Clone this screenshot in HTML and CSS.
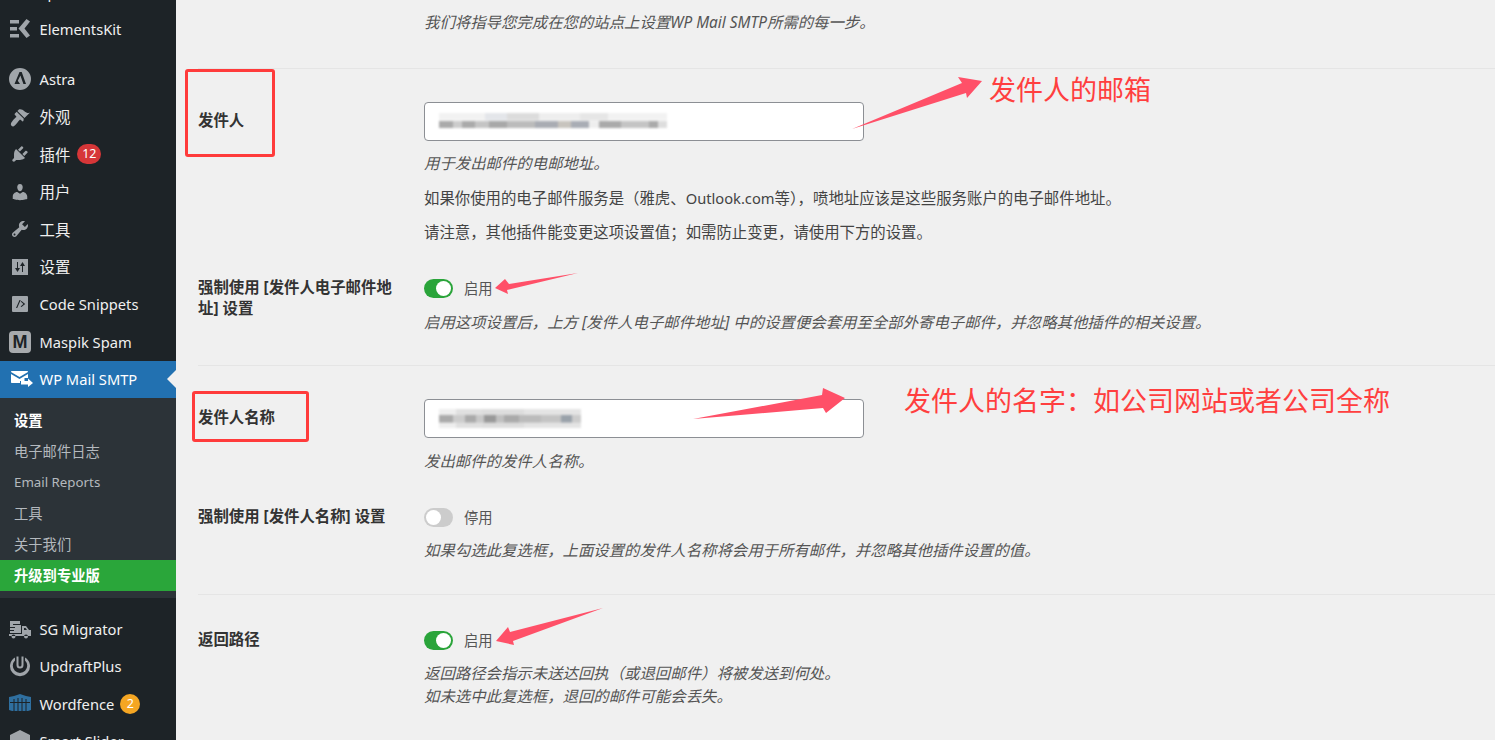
FILE: index.html
```html
<!DOCTYPE html>
<html lang="zh-CN">
<head>
    <meta charset="UTF-8">
    <meta name="viewport" content="width=device-width, initial-scale=1.0">
    <title>WP Mail SMTP 设置</title>
    <link rel="stylesheet" href="styles.css">
</head>
<body>
    <div class="layout">
        <nav class="sidebar">
            <div class="menu-item">
                <svg class="menu-icon" viewBox="0 0 20 20"><path d="M3 3l14 0-3 5 3 9H3l3-7z"/></svg>
                <span class="latin">Spectra</span>
            </div>
            <div class="menu-item">
                <svg class="menu-icon" viewBox="0 0 20 20"><path d="M0 1h9v3.500H0zM0 8h7v3.500H0zM0 15h9v3.500H0zM16.500 0l3.500 2.500-5.500 7 5.500 7-3.500 2.500-8-9.500z"/></svg>
                <span class="latin">ElementsKit</span>
            </div>
            <div class="menu-sep"></div>
            <div class="menu-item">
                <svg class="menu-icon icon-big" viewBox="0 0 22 22"><path fill-rule="evenodd" d="M11 0a11 11 0 1 0 0 22 11 11 0 0 0 0-22zM10.500 4h2.200l4.300 12h-2.600l-3-8.500-2.600 5.300 2.200 3.200H5.500z"/></svg>
                <span class="latin">Astra</span>
            </div>
            <div class="menu-item">
                <svg class="menu-icon" viewBox="0 0 20 20"><path d="M14.480 11.060L7.410 3.990l1.500-1.500c.5-.56 2.300-.47 3.510.32 1.210.8 1.430 1.280 2.910 2.100 1.180.64 2.450 1.260 4.450.85zm-.71.71L6.700 4.700 4.930 6.470c-.39.39-.39 1.020 0 1.410l1.060 1.060c.39.39.39 1.030 0 1.420-.6.6-6 5.400-5 7.700.5 1.200 1.600 1.700 2.700 1.200 2-1 5.200-5.600 5.800-6.200.39-.39 1.030-.39 1.420 0l1.060 1.060c.39.39 1.020.39 1.410 0z"/></svg>
                <span>外观</span>
            </div>
            <div class="menu-item">
                <svg class="menu-icon" viewBox="0 0 20 20"><path d="M13.110 4.360L9.870 7.600 8 5.730l3.240-3.240c.35-.34 1.050-.2 1.560.32.52.51.66 1.210.31 1.550zm-8 1.770l.91-1.120 9.010 9.010-1.190.84c-.71.71-2.630 1.160-3.820 1.160H6.140L4.900 17.260c-.59.59-1.540.59-2.120 0-.59-.58-.59-1.530 0-2.120l1.240-1.240v-3.880c0-1.130.4-3.190 1.090-3.890zm7.260 3.970l3.240-3.240c.34-.35 1.040-.21 1.550.31.52.51.66 1.210.31 1.550l-3.240 3.250z"/></svg>
                <span>插件</span>
                <span class="count count-red">12</span>
            </div>
            <div class="menu-item">
                <svg class="menu-icon" viewBox="0 0 20 20"><path d="M10 9.250c-2.270 0-2.730-3.440-2.730-3.440C7 4.020 7.820 2 9.970 2c2.160 0 2.980 2.020 2.710 3.810 0 0-.41 3.440-2.680 3.440zm0 2.570L12.720 10c2.390 0 4.520 2.330 4.520 4.530v2.490s-3.650 1.130-7.240 1.130c-3.650 0-7.240-1.130-7.240-1.130v-2.490c0-2.250 1.940-4.480 4.470-4.480z"/></svg>
                <span>用户</span>
            </div>
            <div class="menu-item">
                <svg class="menu-icon" viewBox="0 0 20 20"><path d="M16.680 9.770c-1.340 1.340-3.300 1.670-4.950.99l-5.410 6.520c-.99.99-2.590.99-3.580 0s-.99-2.590 0-3.570l6.520-5.420c-.68-1.650-.35-3.610.99-4.950 1.280-1.280 3.120-1.620 4.720-1.060l-2.890 2.890 2.820 2.820 2.860-2.870c.53 1.580.18 3.390-1.080 4.650zM3.810 16.210c.4.39 1.040.39 1.430 0 .4-.4.4-1.040 0-1.430-.39-.4-1.030-.4-1.430 0-.39.39-.39 1.030 0 1.430z"/></svg>
                <span>工具</span>
            </div>
            <div class="menu-item">
                <svg class="menu-icon" viewBox="0 0 20 20"><path fill-rule="evenodd" d="M2 2h16v16H2zM7 5v6H5l2.500 4L10 11H8V5zM12.500 5L10 9h2v6h1V9h2z"/></svg>
                <span>设置</span>
            </div>
            <div class="menu-item">
                <svg class="menu-icon" viewBox="0 0 20 20"><path fill-rule="evenodd" d="M3 2h14a1 1 0 0 1 1 1v14a1 1 0 0 1-1 1H3a1 1 0 0 1-1-1V3a1 1 0 0 1 1-1zM9.500 6L6 14h1.200l3.500-8zM11.500 7l-.9.600L13.400 10l-2.800 2.400.9.600 3.700-3z"/></svg>
                <span class="latin">Code Snippets</span>
            </div>
            <div class="menu-item">
                <span class="maspik-logo">M</span>
                <span class="latin">Maspik Spam</span>
            </div>
            <div class="menu-item menu-active">
                <svg class="menu-icon icon-mail" viewBox="0 0 22 16"><path d="M1 0h15c.6 0 1 .4 1 1L8.500 6 0 1c0-.6.4-1 1-1zM0 3l8.500 5L17 3v4h-3.500v3H9v2H1c-.6 0-1-.4-1-1zM10 10h7V7.500L22 12l-5 4v-2.500h-7z"/></svg>
                <span class="latin">WP Mail SMTP</span>
            </div>
            <ul class="submenu">
                <li class="sub-current">设置</li>
                <li>电子邮件日志</li>
                <li class="latin-sub">Email Reports</li>
                <li>工具</li>
                <li>关于我们</li>
                <li class="sub-upgrade">升级到专业版</li>
            </ul>
            <div class="menu-sep"></div>
            <div class="menu-item">
                <svg class="menu-icon icon-big" viewBox="0 0 22 20"><path fill-rule="evenodd" d="M1 2h10v3H4v1h8v8H1v-2h4v-1H1V9h5V8H1zM13 7h4l3 4h2v6H0v-2h13zM15 9v2h3l-1.500-2zM4.500 15.500a2 2 0 1 0 0 4 2 2 0 0 0 0-4zM17 15.500a2 2 0 1 0 0 4 2 2 0 0 0 0-4z"/></svg>
                <span class="latin">SG Migrator</span>
            </div>
            <div class="menu-item">
                <svg class="menu-icon icon-big" viewBox="0 0 22 22"><path fill-rule="evenodd" d="M6 2.500a10 10 0 1 0 10 0v3a7.200 7.200 0 1 1-10 0z"/><path d="M7.500 1.500h2V10a1.500 1.500 0 0 0 3 0V1.500h2V10a3.500 3.500 0 0 1-7 0z"/></svg>
                <span class="latin">UpdraftPlus</span>
            </div>
            <div class="menu-item">
                <svg class="menu-icon icon-big icon-blue" viewBox="0 0 22 20"><path d="M0 3l5-1 6-2 6 2 5 1v13l-3 1H3l-3-1z"/><path class="shield-lines" d="M5 5v12M9 4v13M13 4v13M17 5v12M1 8.500h20"/></svg>
                <span class="latin">Wordfence</span>
                <span class="count count-orange">2</span>
            </div>
            <div class="menu-item">
                <svg class="menu-icon icon-big" viewBox="0 0 22 22"><path d="M11 0l10 5v12l-10 5-10-5V5z"/></svg>
                <span class="latin">Smart Slider</span>
            </div>
        </nav>

        <main class="content">
            <section class="settings-row row-intro">
                <p class="help">我们将指导您完成在您的站点上设置WP Mail SMTP所需的每一步。</p>
            </section>

            <section class="settings-row row-sender">
                <div class="field">
                    <label class="field-label label-main">发件人</label>
                    <div class="field-body">
                        <div class="text-box">
                            <span class="mosaic mosaic-email"></span>
                            <span class="box-patch"></span>
                        </div>
                        <p class="help help-first">用于发出邮件的电邮地址。</p>
                        <p class="help help-plain">如果你使用的电子邮件服务是（雅虎、<span class="latin">Outlook.com</span>等），喷地址应该是这些服务账户的电子邮件地址。</p>
                        <p class="help help-plain">请注意，其他插件能变更这项设置值；如需防止变更，请使用下方的设置。</p>
                    </div>
                </div>
                <div class="field field-force">
                    <label class="field-label label-toggle">强制使用 [发件人电子邮件地址] 设置</label>
                    <div class="field-body">
                        <div class="toggle-line">
                            <span class="toggle toggle-on"></span>
                            <span class="toggle-text">启用</span>
                        </div>
                        <p class="help help-toggle">启用这项设置后，上方 [发件人电子邮件地址] 中的设置便会套用至全部外寄电子邮件，并忽略其他插件的相关设置。</p>
                    </div>
                </div>
            </section>

            <section class="settings-row row-name">
                <div class="field">
                    <label class="field-label label-main">发件人名称</label>
                    <div class="field-body">
                        <div class="text-box">
                            <span class="mosaic mosaic-name"></span>
                        </div>
                        <p class="help help-first">发出邮件的发件人名称。</p>
                    </div>
                </div>
                <div class="field field-force">
                    <label class="field-label label-toggle">强制使用 [发件人名称] 设置</label>
                    <div class="field-body">
                        <div class="toggle-line">
                            <span class="toggle"></span>
                            <span class="toggle-text">停用</span>
                        </div>
                        <p class="help help-toggle">如果勾选此复选框，上面设置的发件人名称将会用于所有邮件，并忽略其他插件设置的值。</p>
                    </div>
                </div>
            </section>

            <section class="settings-row row-return">
                <div class="field">
                    <label class="field-label label-toggle">返回路径</label>
                    <div class="field-body">
                        <div class="toggle-line">
                            <span class="toggle toggle-on"></span>
                            <span class="toggle-text">启用</span>
                        </div>
                        <p class="help help-toggle">返回路径会指示未送达回执（或退回邮件）将被发送到何处。<br>如未选中此复选框，退回的邮件可能会丢失。</p>
                    </div>
                </div>
            </section>
        </main>
    </div>

    <!-- annotations drawn on top of the screenshot -->
    <div class="mark mark-sender"></div>
    <div class="mark mark-name"></div>
    <svg class="arrows" viewBox="0 0 1495 740">
        <polygon points="852,129 962,83 958,77 982,81 967,98 966,93"/>
        <polygon points="693,419 822,395 823,388 845,398 826,413 823,408"/>
        <polygon points="578,273 509,284 505,279 495,288 508,294 507,290"/>
        <polygon points="603,608 510,632 508,627 496,641 514,645 513,641"/>
    </svg>
    <div class="note note-sender">发件人的邮箱</div>
    <div class="note note-name">发件人的名字：如公司网站或者公司全称</div>
</body>
</html>
```

FILE: styles.css
```css
html, body {
    margin: 0;
    height: 740px;
    overflow: hidden;
}
body {
    position: relative;
    font-family: "Noto Sans", "Noto Sans CJK SC", sans-serif;
    background-color: #f0f0f0;
}
.layout {
    display: flex;
    height: 740px;
}

/* admin menu */
.sidebar {
    width: 176px;
    flex-shrink: 0;
    background: #1d2327;
    color: #f0f0f0;
    font-size: 15.400px;
    overflow: hidden;
    margin-top: -27px;
    height: 780px;
}
.latin {
    font-size: 14.700px;
}
.menu-item {
    display: flex;
    align-items: center;
    height: 37.500px;
    padding-left: 10px;
    position: relative;
}
.menu-icon {
    width: 20px;
    height: 20px;
    margin-right: 9.500px;
    fill: #a0a5aa;
    flex-shrink: 0;
}
.icon-big {
    width: 22px;
    height: 22px;
    margin-left: -1px;
    margin-right: 8.500px;
}
.icon-mail {
    width: 22px;
    height: 16px;
    margin-left: 1px;
    margin-right: 6.500px;
}
.icon-blue {
    fill: #2f6f9f;
}
.shield-lines {
    stroke: #1d2327;
    stroke-width: 1;
    fill: none;
}
.maspik-logo {
    width: 22px;
    height: 22px;
    margin-left: -1px;
    margin-right: 8.500px;
    border-radius: 4px;
    background: #a7aaad;
    color: #1d2327;
    font: bold 18px/22px "Liberation Sans", sans-serif;
    text-align: center;
}
.menu-sep {
    height: 12.500px;
}
.menu-active {
    background: #2271b1;
    color: #fff;
}
.menu-active .menu-icon {
    fill: #fff;
}
.menu-active::after {
    content: "";
    position: absolute;
    right: 0;
    top: 50%;
    margin-top: -9px;
    border: 9px solid transparent;
    border-right-color: #f0f0f0;
    border-left-width: 0;
}
.count {
    margin-left: 7px;
    height: 20px;
    min-width: 20px;
    border-radius: 10px;
    padding: 0 2px;
    box-sizing: border-box;
    color: #fff;
    font-size: 12.500px;
    line-height: 20px;
    text-align: center;
}
.count-red {
    background: #d63638;
    min-width: 24px;
}
.count-orange {
    background: #f5a623;
    margin-left: 6px;
}
.submenu {
    list-style: none;
    margin: 0;
    padding: 6.500px 0 7px;
    background: #2c3338;
    color: #b4b9be;
    font-size: 14.300px;
}
.submenu li {
    height: 31px;
    line-height: 31px;
    padding-left: 14px;
}
.submenu .latin-sub {
    font-size: 13.300px;
}
.sub-current {
    color: #fff;
    font-weight: 700;
}
.submenu .sub-upgrade {
    background: #2aa63a;
    color: #fff;
    font-weight: 700;
}

/* settings form */
.content {
    flex: 1;
    min-width: 0;
    padding-left: 22px;
    color: #444;
}
.settings-row {
    border-bottom: 1px solid #e5e5e5;
}
.row-intro {
    height: 69px;
    padding-left: 226px;
    box-sizing: border-box;
}
.row-intro .help {
    margin: 0;
    padding-top: 11px;
    line-height: 24px;
}
.row-sender {
    height: 297px;
    box-sizing: border-box;
    padding-top: 33px;
}
.row-sender .help-toggle {
    margin-top: 13px;
}
.row-name {
    height: 229px;
    box-sizing: border-box;
    padding-top: 33px;
}
.row-name .help-first {
    margin-top: 7px;
}
.row-return {
    border-bottom: 0;
    padding-top: 35px;
}
.field {
    display: grid;
    grid-template-columns: 226px 440px;
    width: max-content;
}
.field-force {
    margin-top: 28px;
}
.field-label {
    font-size: 15.400px;
    font-weight: 700;
    line-height: 21px;
    color: #333;
}
.label-main {
    padding-top: 8px;
}
.label-toggle {
    width: 200px;
    margin-top: -1px;
}
.field-body {
    width: 1040px;
}
.text-box {
    position: relative;
    width: 440px;
    height: 39px;
    box-sizing: border-box;
    background: #fff;
    border: 1px solid #8c8f94;
    border-radius: 4px;
    overflow: hidden;
}
.box-patch {
    position: absolute;
    left: 4px;
    bottom: -1px;
    width: 239px;
    height: 3px;
    background: #fff;
}
.mosaic {
    position: absolute;
    left: 14px;
    top: 10px;
    filter: blur(1px);
    background-repeat: no-repeat;
}
.mosaic-email {
    width: 228px;
    height: 15px;
    background-position: 0 0, 0 100%;
    background-size: 100% 50%;
    background-image:
        linear-gradient(90deg, #f2f2f2 0 20%, #e4e6ea 20% 30%, #dcdcdc 30% 44%, #eee 44% 62%, #e6e6e6 62% 74%, #f2f2f2 74% 100%),
        linear-gradient(90deg, #aaa 0 6%, #ccc 6% 10%, #aaa 10% 16%, #c4c4c4 16% 22%, #a8a8a8 22% 30%, #bbb 30% 42%, #a9acb3 42% 52%, #c8c4be 52% 58%, #a9adb5 58% 66%, #eee 66% 70%, #aaa 70% 80%, #c4c4c4 80% 92%, #aaa 92% 96%, #ddd 96% 100%);
}
.mosaic-name {
    width: 142px;
    height: 19px;
    top: 9px;
    background-position: 0 55%, 0 0;
    background-size: 100% 40%, 100% 100%;
    background-image:
        linear-gradient(90deg, #aaa 0 10%, #ccc 10% 18%, #aaa 18% 26%, #c8c8c8 26% 32%, #999 32% 40%, #c0c0c0 40% 46%, #aaa 46% 56%, #bbb 56% 72%, #c4c4c4 72% 86%, #9aa2aa 86% 94%, #ccc 94% 100%),
        linear-gradient(90deg, #eee 0 12%, #e0e0e0 12% 30%, #ddd 30% 60%, #e4e4e4 60% 100%);
}
.help {
    margin: 0;
    color: #555;
    font-size: 15.400px;
    font-style: italic;
    line-height: 34px;
}
.help-plain {
    font-style: normal;
    color: #444;
}
.help-first {
    margin-top: 6px;
}
.help-toggle {
    line-height: 23px;
    margin-top: 12px;
}
.toggle-line {
    display: flex;
    align-items: center;
    gap: 11px;
    height: 20px;
    color: #555;
    font-size: 14.300px;
}
.toggle-text {
    margin-top: -2px;
}
.toggle {
    position: relative;
    width: 29px;
    height: 19px;
    border-radius: 10px;
    background: #ccc;
}
.toggle::after {
    content: "";
    position: absolute;
    top: 2px;
    left: 2px;
    width: 15px;
    height: 15px;
    border-radius: 50%;
    background: #fff;
}
.toggle-on {
    background: #2aa43a;
}
.toggle-on::after {
    left: 12px;
}

/* annotations */
.mark {
    position: absolute;
    box-sizing: border-box;
    border: 3px solid #ff3b3b;
    border-radius: 3px;
}
.mark-sender {
    left: 185px;
    top: 69px;
    width: 90px;
    height: 88px;
}
.mark-name {
    left: 192px;
    top: 391px;
    width: 117px;
    height: 51px;
}
.arrows {
    position: absolute;
    left: 0;
    top: 0;
    width: 1495px;
    height: 740px;
    fill: #ff5068;
}
.note {
    position: absolute;
    color: #ff3f3f;
    font-size: 27px;
    line-height: 40px;
}
.note-sender {
    left: 989px;
    top: 70px;
}
.note-name {
    left: 904px;
    top: 381px;
}
```
